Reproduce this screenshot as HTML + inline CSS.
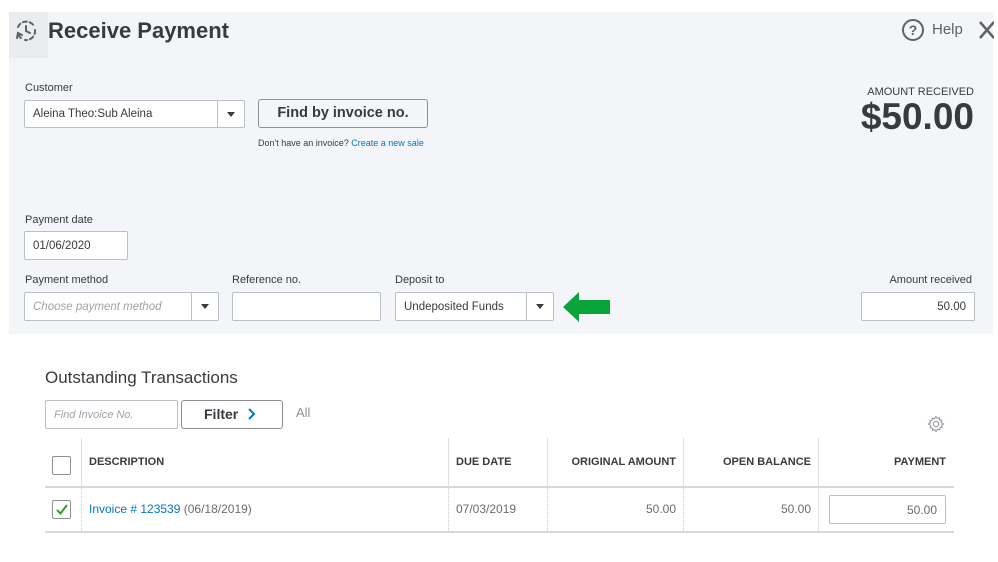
<!DOCTYPE html>
<html><head><meta charset="utf-8"><style>
*{box-sizing:border-box;margin:0;padding:0}
body{width:998px;height:562px;background:#fff;font-family:"Liberation Sans",sans-serif;color:#393a3d;position:relative;overflow:hidden}
.a{position:absolute}
.lbl{font-size:11px;color:#393a3d}
.inp{position:absolute;background:#fff;border:1px solid #babec5;border-radius:2px;font-size:11.5px;color:#393a3d;padding-left:8px;display:flex;align-items:center}
.dd{position:absolute;right:0;top:0;bottom:0;width:34px;border-left:1px solid #babec5;display:flex;align-items:center;justify-content:center}
.tri{width:0;height:0;border-left:4px solid transparent;border-right:4px solid transparent;border-top:5px solid #393a3d}
.th{position:absolute;top:456px;font-size:11px;font-weight:bold;color:#393a3d}
.vl{position:absolute;width:1px;background:#dcdee2}
.vd{position:absolute;width:0;border-left:1px dotted #c8cacf}
</style></head><body>
<div class="a" style="left:9px;top:12px;width:984px;height:322px;background:#f4f5f8"></div>
<div class="a" style="left:9px;top:12px;width:39px;height:46px;background:#ebecef"></div>
<svg class="a" style="left:13px;top:18px" width="26" height="26" viewBox="0 0 26 26" fill="none" stroke="#5f6166" stroke-width="2" stroke-linecap="round">
<path d="M5 9 A9 9 0 0 1 21 8" stroke-dasharray="4 3"/><path d="M22 12 A9 9 0 0 1 12 22" stroke-dasharray="4 3"/><path d="M4 20 L5 15 L9 17"/><path d="M5 15 A9 9 0 0 0 8 20"/><path d="M13 8 V13 L17 15"/></svg>
<div class="a" style="left:48px;top:18px;font-size:22px;font-weight:bold;color:#393a3d">Receive Payment</div>
<div class="a" style="left:902px;top:19px;width:22px;height:22px;border:2px solid #5f6166;border-radius:50%;font-size:14px;font-weight:bold;text-align:center;line-height:18px;color:#5f6166">?</div>
<div class="a" style="left:932px;top:21px;font-size:15px;color:#5f6166">Help</div>
<svg class="a" style="left:978px;top:20px" width="16" height="20"><path d="M2 2 L16 18 M16 2 L2 18" stroke="#5f6166" stroke-width="2.5"/></svg>
<div class="a lbl" style="left:25px;top:82px">Customer</div>
<div class="inp" style="left:24px;top:100px;width:221px;height:28px">Aleina Theo:Sub Aleina<div class="dd" style="width:27px"><div class="tri"></div></div></div>
<div class="a" style="left:258px;top:99px;width:170px;height:29px;border:1px solid #8d9096;border-radius:3px;background:#f4f5f8;font-size:14.5px;font-weight:bold;text-align:center;line-height:27px;color:#393a3d">Find by invoice no.</div>
<div class="a" style="left:258px;top:138px;font-size:9px;color:#393a3d">Don't have an invoice? <span style="color:#0077c5">Create a new sale</span></div>
<div class="a" style="right:24px;top:86px;font-size:11px;color:#393a3d">AMOUNT RECEIVED</div>
<div class="a" style="right:24px;top:96px;font-size:37px;font-weight:bold;color:#393a3d">$50.00</div>
<div class="a lbl" style="left:25px;top:214px">Payment date</div>
<div class="inp" style="left:24px;top:231px;width:104px;height:29px">01/06/2020</div>
<div class="a lbl" style="left:25px;top:274px">Payment method</div>
<div class="inp" style="left:24px;top:292px;width:195px;height:29px;color:#a0a2a6;font-style:italic">Choose payment method<div class="dd" style="width:27px"><div class="tri"></div></div></div>
<div class="a lbl" style="left:232px;top:274px">Reference no.</div>
<div class="inp" style="left:232px;top:292px;width:149px;height:29px"></div>
<div class="a lbl" style="left:395px;top:274px">Deposit to</div>
<div class="inp" style="left:395px;top:292px;width:159px;height:29px">Undeposited Funds<div class="dd" style="width:27px"><div class="tri"></div></div></div>
<svg class="a" style="left:563px;top:291px" width="48" height="32"><path d="M0 16 L16 1 L16 9 L47 9 L47 23 L16 23 L16 31 Z" fill="#08a43a"/></svg>
<div class="a lbl" style="right:26px;top:274px">Amount received</div>
<div class="inp" style="left:861px;top:292px;width:114px;height:29px;justify-content:flex-end;padding-right:8px">50.00</div>
<div class="a" style="left:45px;top:368px;font-size:17px;color:#393a3d">Outstanding Transactions</div>
<div class="inp" style="left:45px;top:400px;width:133px;height:29px;color:#a0a2a6;font-style:italic;font-size:11px">Find Invoice No.</div>
<div class="a" style="left:181px;top:400px;width:102px;height:29px;border:1px solid #8d9096;border-radius:3px;font-size:14px;font-weight:bold;line-height:27px;padding-left:22px">Filter</div>
<svg class="a" style="left:247px;top:408px" width="10" height="12"><path d="M2 1 L7 6 L2 11" stroke="#0077c5" stroke-width="2" fill="none"/></svg>
<div class="a" style="left:296px;top:405px;font-size:13px;color:#8d9096">All</div>
<svg class="a" style="left:927px;top:415px" width="18" height="18" viewBox="0 0 24 24" fill="none" stroke="#9a9ca1" stroke-width="1.5"><circle cx="12" cy="12" r="3.5"/><path d="M12 2l1.5 2.5 2.8-.8.5 2.9 2.9.5-.8 2.8L22 12l-2.5 1.5.8 2.8-2.9.5-.5 2.9-2.8-.8L12 22l-1.5-2.5-2.8.8-.5-2.9-2.9-.5.8-2.8L2 12l2.5-1.5-.8-2.8 2.9-.5.5-2.9 2.8.8z"/></svg>
<div class="vl" style="left:81px;top:438px;height:49px"></div>
<div class="vl" style="left:448px;top:438px;height:49px"></div>
<div class="vl" style="left:547px;top:438px;height:49px"></div>
<div class="vl" style="left:683px;top:438px;height:49px"></div>
<div class="vl" style="left:818px;top:438px;height:49px"></div>
<div class="vd" style="left:81px;top:488px;height:43px"></div>
<div class="vd" style="left:448px;top:488px;height:43px"></div>
<div class="vd" style="left:547px;top:488px;height:43px"></div>
<div class="vd" style="left:683px;top:488px;height:43px"></div>
<div class="vd" style="left:818px;top:488px;height:43px"></div>
<div class="a" style="left:45px;top:486px;width:909px;height:2px;background:#d4d7dc"></div>
<div class="a" style="left:45px;top:531px;width:909px;height:2px;background:#d4d7dc"></div>
<div class="a" style="left:52px;top:456px;width:19px;height:19px;border:1px solid #8d9096;border-radius:2px;background:#fff"></div>
<div class="a" style="left:52px;top:500px;width:19px;height:19px;border:1px solid #8d9096;border-radius:2px;background:#fff"></div>
<svg class="a" style="left:55px;top:503px" width="14" height="13"><path d="M2 7 L5.5 10.5 L12 2" stroke="#2ca01c" stroke-width="2" fill="none"/></svg>
<div class="th" style="left:89px">DESCRIPTION</div>
<div class="th" style="left:456px">DUE DATE</div>
<div class="th" style="right:322px">ORIGINAL AMOUNT</div>
<div class="th" style="right:187px">OPEN BALANCE</div>
<div class="th" style="right:52px">PAYMENT</div>
<div class="a" style="left:89px;top:502px;font-size:12px;color:#6b6c72"><span style="color:#0077c5">Invoice # 123539</span> (06/18/2019)</div>
<div class="a" style="left:456px;top:502px;font-size:12px;color:#6b6c72">07/03/2019</div>
<div class="a" style="right:322px;top:502px;font-size:12px;color:#6b6c72">50.00</div>
<div class="a" style="right:187px;top:502px;font-size:12px;color:#6b6c72">50.00</div>
<div class="inp" style="left:829px;top:495px;width:117px;height:29px;justify-content:flex-end;padding-right:8px;font-size:12px;color:#6b6c72">50.00</div>
</body></html>
